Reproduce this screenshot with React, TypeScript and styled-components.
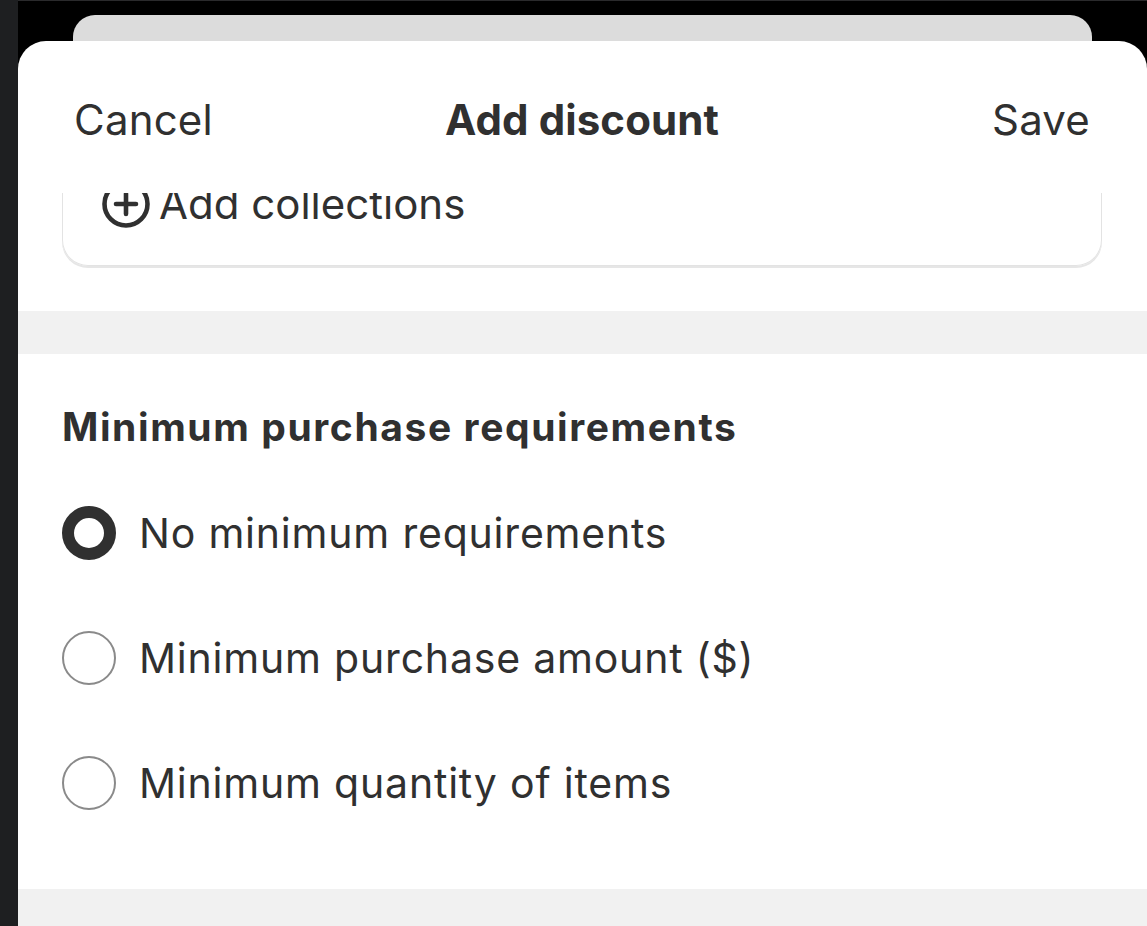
import styled, { createGlobalStyle } from "styled-components";

const GlobalStyle = createGlobalStyle`
  html, body {
    margin: 0;
    padding: 0;
    height: 100%;
    background: #1e1f21;
  }
  #root {
    height: 100%;
  }
  * {
    box-sizing: border-box;
  }
`;

const options = [
  "No minimum requirements",
  "Minimum purchase amount ($)",
  "Minimum quantity of items",
];

export default function App() {
  const selected = 0;

  return <>
    <GlobalStyle />
    <Page>
      <SideStrip />
      <Screen>
        <BackCard />
        <Sheet>
          <Header>
            <HeaderButton>Cancel</HeaderButton>
            <Title>Add discount</Title>
            <HeaderButton $right>Save</HeaderButton>
          </Header>
          <Body>
            <Card>
              <AddRow>
                <PlusCircle />
                <span>Add collections</span>
              </AddRow>
            </Card>
            <Divider />
            <Section>
              <SectionTitle>Minimum purchase requirements</SectionTitle>
              <RadioList>
                {options.map((label, i) =>
                  <RadioRow key={label}>
                    <Radio $checked={i === selected} />
                    <RadioLabel>{label}</RadioLabel>
                  </RadioRow>
                )}
              </RadioList>
            </Section>
            <Divider />
          </Body>
        </Sheet>
      </Screen>
    </Page>
  </>;
}

function PlusCircle() {
  return <svg width="50" height="50" viewBox="0 0 50 50" fill="none">
    <circle cx="25" cy="25" r="21.5" stroke="#303030" strokeWidth="4.6" />
    <path d="M25 15v20M15 25h20" stroke="#303030" strokeWidth="4.6" strokeLinecap="round" />
  </svg>;
}

const Page = styled.div`
  display: flex;
  flex-direction: row;
  height: 926px;
  width: 1147px;
  overflow: hidden;
  font-family: Inter, "Noto Sans", sans-serif;
  color: #303030;
`;

const SideStrip = styled.div`
  width: 18px;
  flex: none;
  background: #1e1f21;
`;

const Screen = styled.div`
  flex: 1;
  display: flex;
  flex-direction: column;
  background: #000;
  padding-top: 14px;
  border-top: 1px solid #2a2a2c;
`;

const BackCard = styled.div`
  flex: none;
  height: 40px;
  margin: 0 55px;
  border-radius: 22px 22px 0 0;
  background: #dcdcdc;
`;

const Sheet = styled.div`
  flex: 1;
  display: flex;
  flex-direction: column;
  margin-top: -14px;
  position: relative;
  background: #fff;
  border-radius: 28px 28px 0 0;
  overflow: hidden;
`;

const Header = styled.div`
  flex: none;
  height: 152px;
  display: grid;
  grid-template-columns: 1fr auto 1fr;
  align-items: center;
  padding: 4px 57px 0 56px;
`;

const HeaderButton = styled.div<{ $right?: boolean }>`
  font-size: 42px;
  font-weight: 400;
  letter-spacing: 0.2px;
  text-align: ${p => p.$right ? "right" : "left"};
`;

const Title = styled.div`
  font-size: 42px;
  font-weight: 700;
  letter-spacing: 0.1px;
`;

const Body = styled.div`
  flex: 1;
  overflow: hidden;
  display: flex;
  flex-direction: column;
`;

const Card = styled.div`
  flex: none;
  margin: -60px 45px 45px 44px;
  padding: 0 38px 36px;
  border: 1.5px solid #e3e3e3;
  border-top: none;
  border-radius: 0 0 26px 26px;
  box-shadow: 0 2px 0 #e6e6e6;
  height: 133px;
  display: flex;
  align-items: flex-end;
`;

const AddRow = styled.div`
  display: flex;
  align-items: center;
  gap: 8px;
  font-size: 42px;
  line-height: 50px;
`;

const Divider = styled.div`
  flex: none;
  height: 43px;
  background: #f1f1f1;
`;

const Section = styled.div`
  flex: none;
  padding: 49px 44px 80px;
`;

const SectionTitle = styled.div`
  font-size: 39px;
  line-height: 48px;
  font-weight: 650;
  letter-spacing: 1.6px;
`;

const RadioList = styled.div`
  display: flex;
  flex-direction: column;
  gap: 73px;
  margin-top: 56px;
`;

const RadioRow = styled.div`
  display: flex;
  align-items: center;
  height: 52px;
  gap: 23px;
`;

const Radio = styled.div<{ $checked: boolean }>`
  width: 54px;
  height: 54px;
  flex: none;
  border-radius: 50%;
  border: ${p => p.$checked ? "12px solid #303030" : "2.5px solid #8a8a8a"};
  background: #fff;
`;

const RadioLabel = styled.div`
  font-size: 41px;
  line-height: 52px;
  letter-spacing: 0.8px;
`;
